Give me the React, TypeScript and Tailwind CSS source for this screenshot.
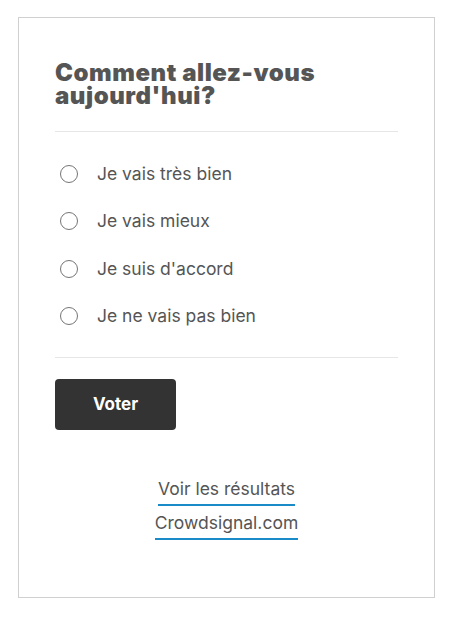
const options = [
  "Je vais très bien",
  "Je vais mieux",
  "Je suis d'accord",
  "Je ne vais pas bien",
];

export default function App() {
  return (
    <div className="min-h-[620px] bg-white pt-[17px] font-['Inter',sans-serif]">
      <div className="mx-[18px] h-[581px] border border-[#d0d0d0] px-9 pt-[43px]">
        <h2 className="text-[24px] font-black leading-[23px] tracking-[0.55px] text-[#555555]">
          Comment allez-vous
          <br />
          aujourd'hui?
        </h2>
        <div className="mt-[24px] h-px bg-[#e6e6e6]" />
        <div className="pt-[18px]">
          {options.map((o) => (
            <label key={o} className="flex h-[47.5px] items-center gap-[19px] pl-[5px]">
              <span className="h-[18px] w-[18px] rounded-full border-[1.5px] border-[#757575] bg-white" />
              <span className="text-[17.5px] text-[#555555]">{o}</span>
            </label>
          ))}
        </div>
        <div className="mt-[17px] h-px bg-[#e6e6e6]" />
        <button className="mt-[21px] flex h-[51px] w-[121px] items-center justify-center rounded-[4px] bg-[#333333] text-[17px] font-bold text-white">
          Voter
        </button>
        <div className="mt-[47px] flex flex-col items-center gap-[5px]">
          <a className="border-b-2 border-[#1a8bc7] pb-[3px] text-[17.5px] leading-[24px] text-[#555555]">
            Voir les résultats
          </a>
          <a className="border-b-2 border-[#1a8bc7] pb-[3px] text-[17.5px] leading-[24px] text-[#555555]">
            Crowdsignal.com
          </a>
        </div>
      </div>
    </div>
  );
}
